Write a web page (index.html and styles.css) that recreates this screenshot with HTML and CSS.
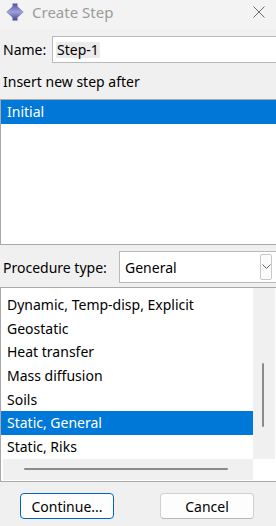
FILE: index.html
```html
<!DOCTYPE html>
<html>
<head>
<meta charset="utf-8">
<link rel="stylesheet" href="styles.css">
</head>
<body>
<div class="dialog">
  <div class="titlebar">
    <svg class="app-icon" width="18" height="18" viewBox="0 0 18 18">
      <defs>
        <linearGradient id="g" x1="0" y1="0" x2="0" y2="1">
          <stop offset="0" stop-color="#5050a0"/>
          <stop offset="0.5" stop-color="#a0a0dc"/>
          <stop offset="1" stop-color="#45458f"/>
        </linearGradient>
      </defs>
      <path d="M6.5 0.5 H11.5 V3.5 L17.8 9 L11.5 14.5 V17.5 H6.5 V14.5 L0.2 9 L6.5 3.5 Z" fill="url(#g)"/>
    </svg>
    <span class="title">Create Step</span>
    <svg class="close" width="12" height="12" viewBox="0 0 12 12">
      <path d="M0.5 0.5 L11.5 11.5 M11.5 0.5 L0.5 11.5" stroke="#6a6a6a" stroke-width="1"/>
    </svg>
  </div>

  <div class="name-row">
    <span class="label name-label">Name:</span>
    <div class="textbox"><span class="sel-text">Step-1</span></div>
  </div>

  <div class="caption">Insert new step after</div>

  <div class="listbox list-steps">
    <div class="item selected">Initial</div>
  </div>

  <div class="proc-row">
    <span class="label">Procedure type:</span>
    <div class="combo">
      <span>General</span>
      <span class="combo-btn">
        <svg width="9" height="6" viewBox="0 0 9 6"><path d="M0.5 0.5 L4.5 4.5 L8.5 0.5" stroke="#606060" fill="none" stroke-width="1"/></svg>
      </span>
    </div>
  </div>

  <div class="listbox list-proc">
    <div class="proc-items">
      <div class="item">Dynamic, Temp-disp, Explicit</div>
      <div class="item">Geostatic</div>
      <div class="item">Heat transfer</div>
      <div class="item">Mass diffusion</div>
      <div class="item">Soils</div>
      <div class="item selected">Static, General</div>
      <div class="item">Static, Riks</div>
    </div>
    <div class="vscroll"><div class="vthumb"></div></div>
    <div class="hscroll"><div class="hthumb"></div></div>
    <div class="corner"></div>
  </div>

  <div class="buttons">
    <button class="btn default">Continue...</button>
    <button class="btn">Cancel</button>
  </div>
</div>
</body>
</html>
```

FILE: styles.css
```css
* { box-sizing: border-box; }
html, body {
  margin: 0;
  padding: 0;
  width: 276px;
  height: 526px;
  overflow: hidden;
  background: #f0f0f0;
  font-family: "Noto Sans", "Open Sans", sans-serif;
  font-size: 14px;
  color: #000;
}
.dialog {
  width: 276px;
  height: 526px;
  display: flex;
  flex-direction: column;
}
.titlebar {
  height: 29px;
  background: #f3f3f3;
  display: flex;
  align-items: center;
  padding: 0 11px 5px 6px;
}
.app-icon { flex: none; }
.title {
  margin-left: 8px;
  font-size: 15px;
  color: #9b9b9b;
  flex: 1;
}
.close { flex: none; }

.name-row {
  display: flex;
  align-items: center;
  margin-top: 7px;
  padding-left: 3px;
}
.name-label { width: 49px; }
.textbox {
  flex: 1;
  height: 27px;
  border: 1px solid #b9b9b9;
  border-right: none;
  background: #fff;
  display: flex;
  align-items: center;
  padding-left: 3px;
}
.sel-text {
  background: #ebebeb;
  padding: 0 1px;
  line-height: 16px;
}
.caption {
  margin-top: 9px;
  padding-left: 3px;
  height: 27px;
  line-height: 20px;
}
.listbox {
  border: 1px solid #a9a9a9;
  border-right: none;
  background: #fff;
}
.list-steps {
  height: 146px;
}
.item {
  height: 23.67px;
  line-height: 23.67px;
  padding-left: 6px;
  white-space: nowrap;
}
.item.selected {
  background: #0078d7;
  color: #fff;
}
.list-steps .item { height: 24px; line-height: 24px; }

.proc-row {
  display: flex;
  align-items: center;
  margin-top: 6px;
  height: 32px;
  padding-left: 3px;
}
.proc-row .label { width: 116px; }
.combo {
  flex: 1;
  height: 32px;
  border: 1px solid #b9b9b9;
  border-right: none;
  background: #fff;
  display: flex;
  align-items: center;
  padding-left: 5px;
}
.combo span:first-child { flex: 1; }
.combo-btn {
  width: 12px;
  height: 26px;
  margin-right: 4px;
  border: 1px solid #c8c8c8;
  border-radius: 2px;
  display: flex;
  align-items: center;
  justify-content: center;
  background: #fbfbfb;
}

.list-proc {
  margin-top: 4px;
  height: 195px;
  display: grid;
  grid-template-columns: 252px 22px;
  grid-template-rows: 171px 21px;
}
.proc-items {
  padding-top: 5px;
  overflow: hidden;
}
.vscroll {
  background: #f0f0f0;
  position: relative;
}
.vthumb {
  position: absolute;
  left: 9px;
  top: 75px;
  width: 2px;
  height: 64px;
  background: #8a8a8a;
  border-radius: 1px;
}
.hscroll {
  background: #f0f0f0;
  margin-left: 2px;
  position: relative;
}
.hthumb {
  position: absolute;
  left: 21px;
  top: 9px;
  width: 204px;
  height: 2px;
  background: #8a8a8a;
  border-radius: 1px;
}
.corner { background: #fff; }

.buttons {
  display: flex;
  gap: 46px;
  padding-left: 20px;
  margin-top: 11px;
}
.btn {
  width: 94px;
  height: 26px;
  font-family: inherit;
  font-size: 14px;
  background: #fdfdfd;
  border: 1px solid #d0d0d0;
  border-bottom-color: #b8b8b8;
  border-radius: 4px;
  padding: 0;
  color: #000;
}
.btn.default {
  border: 1px solid #0067c0;
  box-shadow: inset 0 0 0 1px #ffffff;
}
```
